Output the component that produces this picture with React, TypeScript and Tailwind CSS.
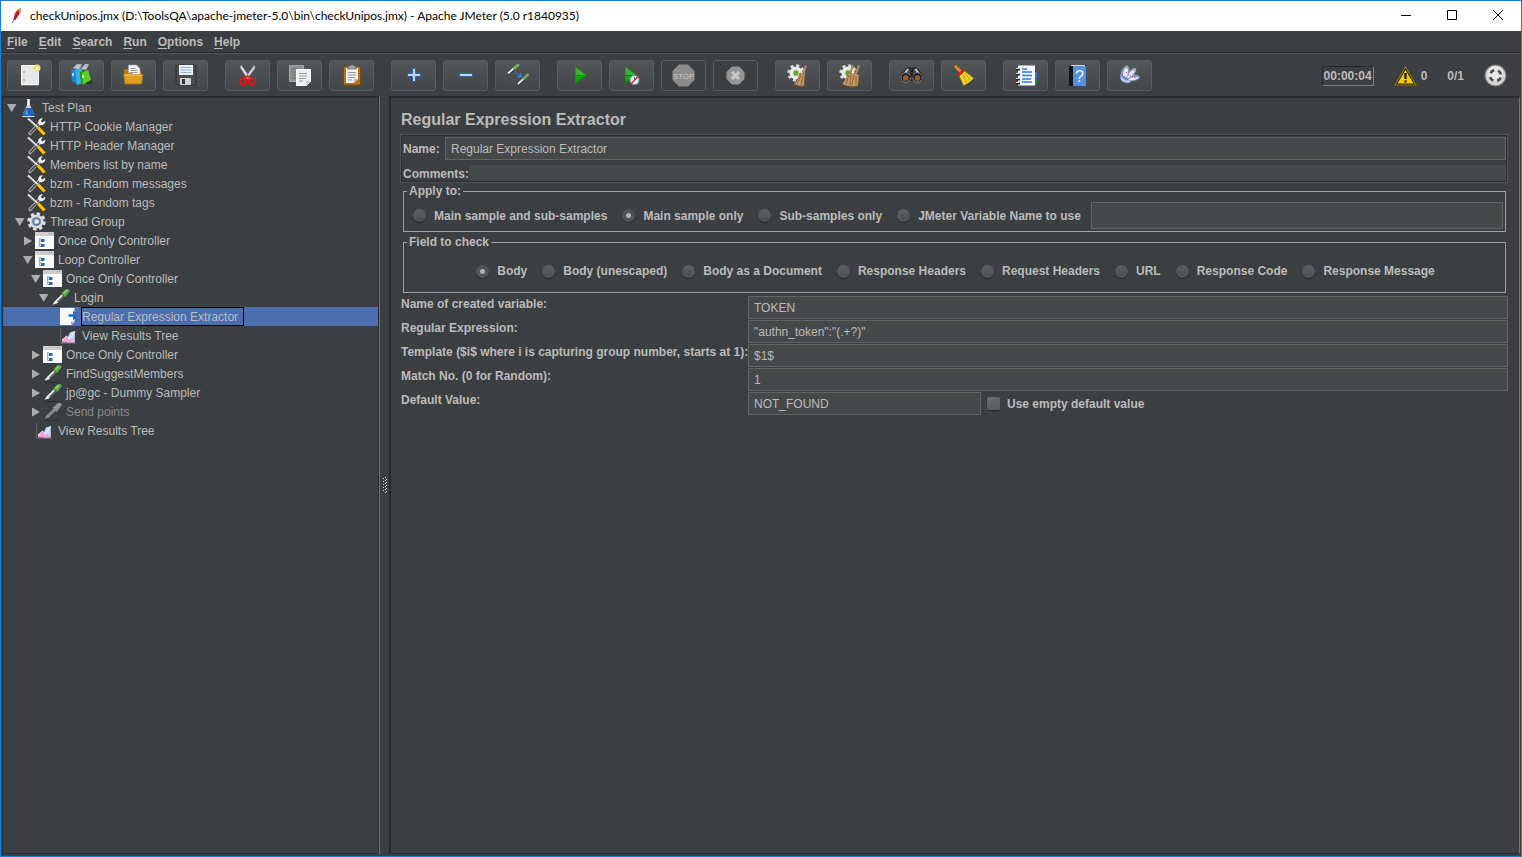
import { useState } from "react";
import type { ReactNode } from "react";
import clsx from "clsx";

type TreeIconName =
  | "plan"
  | "tools"
  | "gear"
  | "controller"
  | "sampler"
  | "samplerOff"
  | "extractor"
  | "results";

type TreeItem = {
  id: string;
  label: string;
  icon: TreeIconName;
  disabled?: boolean;
  closed?: boolean;
  children?: TreeItem[];
};

const TREE: TreeItem = {
  id: "plan",
  label: "Test Plan",
  icon: "plan",
  children: [
    { id: "cookie", label: "HTTP Cookie Manager", icon: "tools" },
    { id: "header", label: "HTTP Header Manager", icon: "tools" },
    { id: "members", label: "Members list by name", icon: "tools" },
    { id: "messages", label: "bzm - Random messages", icon: "tools" },
    { id: "tags", label: "bzm - Random tags", icon: "tools" },
    {
      id: "threads",
      label: "Thread Group",
      icon: "gear",
      children: [
        { id: "once1", label: "Once Only Controller", icon: "controller", closed: true, children: [] },
        {
          id: "loop",
          label: "Loop Controller",
          icon: "controller",
          children: [
            {
              id: "once2",
              label: "Once Only Controller",
              icon: "controller",
              children: [
                {
                  id: "login",
                  label: "Login",
                  icon: "sampler",
                  children: [
                    { id: "regex", label: "Regular Expression Extractor", icon: "extractor" },
                    { id: "results1", label: "View Results Tree", icon: "results" },
                  ],
                },
              ],
            },
            { id: "once3", label: "Once Only Controller", icon: "controller", closed: true, children: [] },
            { id: "find", label: "FindSuggestMembers", icon: "sampler", closed: true, children: [] },
            { id: "dummy", label: "jp@gc - Dummy Sampler", icon: "sampler", closed: true, children: [] },
            {
              id: "send",
              label: "Send points",
              icon: "samplerOff",
              disabled: true,
              closed: true,
              children: [],
            },
          ],
        },
        { id: "results2", label: "View Results Tree", icon: "results" },
      ],
    },
  ],
};

function Pipette({ off }: { off?: boolean }) {
  return (
    <>
      <path d="M2 18.500h14" stroke="#2c2e2f" strokeWidth="1" />
      <path d="M1.500 16.800 3.500 13.500 11 6l2.200 2.200-7.400 7.400z" fill={off ? "#8a8a8a" : "#ededed"} />
      <path d="m6.500 14 6-6" stroke={off ? "#808080" : "#5b5f5b"} strokeWidth="1.200" />
      <path d="m10 5 4.500 4.500" stroke={off ? "#8a8a8a" : "#2c5a22"} strokeWidth="1.400" />
      <path d="M10.500 5.500 14 1.800c1.800-1.500 6-.8 4.200 2.200L14 9z" fill={off ? "#8f8f8f" : "#5cab42"} />
      <path d="m12.500 5.500 3.300-3.300" stroke={off ? "#9c9c9c" : "#a3da8c"} strokeWidth="1.200" />
    </>
  );
}

const TREE_ICONS: Record<TreeIconName, ReactNode> = {
  plan: (
    <>
      <path d="M8 1h3v6l4 9v2H4v-2l4-9z" fill="#c9d3dc" />
      <path d="M9.500 1v6" stroke="#fff" strokeWidth="1.200" />
      <path d="m7 10-3 6v2h11v-2l-2.500-6z" fill="#1766c4" />
      <path d="m8 11-2 5 3 1z" fill="#5aa6f2" />
      <path d="M3.500 18.500h12" stroke="#d6e2ee" strokeWidth="1" />
    </>
  ),
  tools: (
    <>
      <path d="M3 16.500 13 6" stroke="#a5a5a5" strokeWidth="3.400" strokeLinecap="round" />
      <path d="M3.500 16 12.500 6.500" stroke="#45484a" strokeWidth="1.400" strokeLinecap="round" />
      <path d="M11.500 7C10.200 3.500 13 .8 15.800 1.200L13.800 4l1.600 1.600L18.200 3.800c.6 2.500-2 5.200-5 4.200z" fill="#f0f0f0" />
      <path d="m1 1.500 10 9.500" stroke="#efefef" strokeWidth="2" />
      <path d="m1.500 3 9 8.500" stroke="#6b6b6b" strokeWidth=".8" />
      <path d="m10.500 10.500 7 7.500" stroke="#4a3b08" strokeWidth="4.400" />
      <path d="m11 10.500 6.500 7" stroke="#ffc20a" strokeWidth="3.200" />
    </>
  ),
  gear: (
    <>
      <circle cx="9.500" cy="9.500" r="7.500" fill="none" stroke="#dedede" strokeWidth="3.400" strokeDasharray="3.200 2.690" />
      <circle cx="9.500" cy="9.500" r="7" fill="#dedede" />
      <circle cx="9.500" cy="9.500" r="4.600" fill="#4b6f9f" stroke="#b4bdc8" strokeWidth="1" />
      <circle cx="9.500" cy="9.500" r="2.800" fill="#a5bcdb" />
      <path d="m8.500 7.500 3.500 2-3.500 2.200z" fill="#fff" />
    </>
  ),
  controller: (
    <>
      <path d="M0 1h19v17H0z" fill="#fafafa" />
      <path d="M0 1h19v4H0z" fill="#cdcdcd" />
      <path d="M14 2.500h1m1 0h1" stroke="#999" strokeWidth="1" />
      <path d="M4.500 7v8.500h3M4.500 10h3" stroke="#a5a5a5" fill="none" strokeWidth="1" />
      <path d="M6 8h3.500v3H6zM6 13h3.500v3H6z" fill="#2468b0" />
      <path d="M4 7h2v1.500H4zM4 12h2v1.500H4z" fill="#8fb3dc" />
    </>
  ),
  sampler: <Pipette />,
  samplerOff: <Pipette off />,
  extractor: (
    <>
      <path d="M1 1h14.500v14L12 18H1z" fill="#fafafa" />
      <path d="M12 18v-4l3.500 1z" fill="#b8b8b8" />
      <path d="M9.500 7.200h4.500V3.500L19 8.500 14 13.500V9.800H9.500z" fill="#1b6fd0" />
    </>
  ),
  results: (
    <>
      <path d="M1.500 2v15.500H17" stroke="#5c5f61" fill="none" strokeWidth="1" />
      <path d="m8 13 3-6.500 4.800-1.500v11.500H8z" fill="#c6dafa" />
      <path d="M3 16.500V14l4.500-4 3 3.500L12 12l3.500 4.500z" fill="#f2a3da" />
      <path d="m3 14 4.500-4 3 3.500L14 8l2-3" fill="none" stroke="#fff" strokeWidth=".8" />
    </>
  ),
};

function TreeRow({
  item,
  level,
  selected,
  onSelect,
}: {
  item: TreeItem;
  level: number;
  selected: string;
  onSelect: (id: string) => void;
}) {
  const [open, setOpen] = useState(!item.closed);
  const active = selected === item.id;

  return (
    <li role="treeitem" aria-selected={active} aria-expanded={item.children ? open : undefined}>
      <div className={clsx("flex h-[19px] items-center", active && "bg-[#4b6eaf]")}>
        <span className="shrink-0" style={{ width: 4 + level * 8 }} />
        {item.children ? (
          <button
            type="button"
            aria-label={`Toggle ${item.label}`}
            className="w-3 shrink-0"
            onClick={() => setOpen(!open)}
          >
            <svg viewBox="0 0 12 12" className="block size-3" fill="#adadad">
              {open ? <path d="M0 2h9.500L4.700 10z" /> : <path d="M1 1.500 9 6 1 10.500z" />}
            </svg>
          </button>
        ) : (
          <span className="w-3 shrink-0" />
        )}
        <svg viewBox="0 0 19 19" className="size-[19px] shrink-0">
          {TREE_ICONS[item.icon]}
        </svg>
        <button
          type="button"
          onClick={() => onSelect(item.id)}
          className={clsx(
            "ml-[3px] h-[19px] border pr-[5px] leading-[19px] whitespace-nowrap",
            active ? "border-black" : "border-transparent",
            item.disabled ? "text-[#888888]" : "text-[#bbbbbb]"
          )}
        >
          {item.label}
        </button>
      </div>
      {item.children && open && (
        <ul role="group">
          {item.children.map((child) => (
            <TreeRow key={child.id} item={child} level={level + 1} selected={selected} onSelect={onSelect} />
          ))}
        </ul>
      )}
    </li>
  );
}

const MINI_GEAR = (
  <>
    <circle cx="10" cy="9" r="7" fill="none" stroke="#dcdcdc" strokeWidth="3.500" strokeDasharray="2.800 2.700" />
    <circle cx="10" cy="9" r="6.500" fill="#ececec" />
    <circle cx="10" cy="9" r="3" fill="#62a82c" stroke="#b9c9ac" strokeWidth="1" />
  </>
);

type ToolButton = { name: string; disabled?: boolean; art: ReactNode };

const TOOLBAR: ToolButton[][] = [
  [
    {
      name: "New",
      art: (
        <>
          <path d="M3.500 1.500h17v19h-17z" fill="#e6e6e6" stroke="#fafafa" />
          <path d="M3 21.500h18" stroke="#77736a" strokeWidth="1" />
          <path d="M6 7v2m0 6v2" stroke="#888" strokeWidth="1" />
          <circle cx="19" cy="4" r="3.500" fill="#f1e171" />
          <circle cx="19" cy="4" r="1.500" fill="#fffbd0" />
        </>
      ),
    },
    {
      name: "Templates",
      art: (
        <>
          <path d="M12 20h11l-3-5z" fill="#303334" />
          <path d="M3 4 7 0h5L9 6zM11 5l4-5h4l-3 6z" fill="#b9c0c3" stroke="#8a9193" strokeWidth=".6" />
          <path d="m1 5 7 1v15l-6-4z" fill="#1488d2" />
          <path d="m5 6 7-2v15l-5 2z" fill="#3aaeea" />
          <path d="m10 8 6-2v14l-5 1z" fill="#2a930e" />
          <path d="m12 9 6-3 3 10-8 4.500z" fill="#55d321" />
          <path d="M3 9v3m10-1v3" stroke="#e8f6ff" strokeWidth="1.500" />
        </>
      ),
    },
    {
      name: "Open",
      art: (
        <>
          <path d="M2 5.500h5l1 2h11V15H2z" fill="#b97a0c" />
          <path d="M6.500 1h8L18 4.500V13H6.500z" fill="#f1f1f1" stroke="#aaa" strokeWidth=".6" />
          <path d="M8.500 4.500h5m-5 2h7m-7 2h7" stroke="#999" strokeWidth="1" />
          <path d="m1.500 10 7-1h1l1 1.500H21L19.500 20H3z" fill="#dc9f20" stroke="#a86f08" strokeWidth=".8" />
          <path d="M3 11h17" stroke="#f3c55c" strokeWidth="1" />
        </>
      ),
    },
    {
      name: "Save",
      art: (
        <>
          <path d="M2 2.500Q2 1 3.500 1h17Q22 1 22 2.500V21H4l-2-2z" fill="#4a4c4e" stroke="#26282a" strokeWidth=".8" />
          <path d="M5 1h14v10H5z" fill="#e9f1fb" />
          <path d="M6.500 3.500h11m-11 2.500h11m-11 2.500h11" stroke="#8fb4da" strokeWidth="1" />
          <path d="M6 14h11v7H6z" fill="#cfcfcf" />
          <path d="M8 15h3v5H8z" fill="#303234" />
        </>
      ),
    },
  ],
  [
    {
      name: "Cut",
      art: (
        <>
          <path d="m5 1 9 13-2 1L4.500 4z" fill="#f0f0f0" stroke="#999" strokeWidth=".6" />
          <path d="M18.500 1 9 14l2 1L19 4z" fill="#dedede" stroke="#999" strokeWidth=".6" />
          <circle cx="7" cy="17.500" r="3" fill="none" stroke="#d81818" strokeWidth="2.500" />
          <circle cx="16" cy="17.500" r="3" fill="none" stroke="#d81818" strokeWidth="2.500" />
          <path d="m8.500 15 3-3 3 3" fill="none" stroke="#e22" strokeWidth="2" />
        </>
      ),
    },
    {
      name: "Copy",
      art: (
        <>
          <path d="M1.500 1.500h14v16h-14z" fill="#8f9293" stroke="#a3a6a7" />
          <path d="M3.500 5h8m-8 3h6m-6 3h5m-5 3h5" stroke="#6d7071" strokeWidth="1" />
          <path d="M8.500 5.500h14v12l-4 4h-10z" fill="#efefef" stroke="#fff" />
          <path d="M11 9.500h8m-8 2.500h8m-8 2.500h7M11 17h4" stroke="#999" strokeWidth="1" />
          <path d="M18.500 21.500v-4h4z" fill="#bfbfbf" />
        </>
      ),
    },
    {
      name: "Paste",
      art: (
        <>
          <rect x="3.500" y="2.500" width="17" height="18.500" rx="1" fill="#b87519" stroke="#7c4a08" strokeWidth="1" />
          <path d="M6 4h12v11l-4 4H6z" fill="#f0f0f0" />
          <path d="M8 8.500h8M8 11h8m-8 2.500h7M8 16h4" stroke="#999" strokeWidth="1" />
          <path d="M14 19v-4h4z" fill="#b5b5b5" />
          <path d="M7.500 5V2.500h2L10.500 1h3l1 1.500h2V5z" fill="#a0a0a0" stroke="#6a6a6a" strokeWidth=".7" />
        </>
      ),
    },
  ],
  [
    {
      name: "Expand all",
      art: <path d="M10.500 4.500h3v5h5v3h-5v5h-3v-5h-5v-3h5z" fill="#bcd5f0" stroke="#2a62b4" strokeWidth="1" />,
    },
    {
      name: "Collapse all",
      art: <path d="M5.500 9.500h13v3h-13z" fill="#bcd5f0" stroke="#2a62b4" strokeWidth="1" />,
    },
    {
      name: "Toggle",
      art: (
        <>
          <path d="m2 10 7-6.500M12 20.500l7-6.500" stroke="#292b2c" strokeWidth="3" />
          <path d="m2 9.500 7-6.500M12 20l7-6.500" stroke="#e5e5e5" strokeWidth="2" />
          <path d="m8.500 4 3.500-3M18 14.500l3.500-3.500" stroke="#77aa5b" strokeWidth="3" strokeLinecap="round" />
          <path d="m8.500 7.500 3 2.500" stroke="#2f82e8" strokeWidth="1.500" strokeDasharray="1.500 1" />
          <path d="M15.500 8.500v5h-5z" fill="#2f82e8" />
        </>
      ),
    },
  ],
  [
    {
      name: "Start",
      art: (
        <>
          <path d="m7 2 12.500 9.500L7 20z" fill="#0a8a0a" />
          <path d="m7.500 3 10.500 8H7.500z" fill="#3fae35" />
          <path d="M7.500 12h9l-9 6z" fill="#08a808" />
        </>
      ),
    },
    {
      name: "Start no pauses",
      art: (
        <>
          <path d="m5 2 12.500 9.500L5 20z" fill="#0a8a0a" />
          <path d="M5.500 3 16 11H5.500z" fill="#3fae35" />
          <path d="M5.500 12h9l-9 6z" fill="#08a808" />
          <circle cx="14.500" cy="16" r="4.500" fill="#eef4fb" stroke="#6d9bc8" strokeWidth="1" />
          <path d="M14.500 16v-3" stroke="#335f93" strokeWidth="1" />
          <path d="m10.500 20.500 8.500-9" stroke="#d42a2a" strokeWidth="1.500" />
        </>
      ),
    },
    {
      name: "Stop",
      disabled: true,
      art: (
        <>
          <path d="M7 .5h9L22.500 7v9L16 22.500H7L.5 16V7z" fill="#8c8c8c" />
          <text x="11.500" y="14.500" textAnchor="middle" fontSize="8" fontWeight="normal" fill="#c6c6c6">
            STOP
          </text>
        </>
      ),
    },
    {
      name: "Shutdown",
      disabled: true,
      art: (
        <>
          <path d="M8 2.500h7l5.500 5.500v7L15 20.500H8L2.500 15V8z" fill="#959595" />
          <path d="m8 8 7 7m0-7-7 7" stroke="#c9c9c9" strokeWidth="3" />
        </>
      ),
    },
  ],
  [
    {
      name: "Clear",
      art: (
        <>
          {MINI_GEAR}
          <path d="m19 1 2 .5L18 11l-2-1z" fill="#b58a5c" />
          <path d="m14 9 5 2-1 11c-4 1-7-1-10-2 3-3 5-7 6-11z" fill="#c69a68" stroke="#7b5630" strokeWidth=".6" />
          <path d="m15 11-4 9m6-8-2 9" stroke="#8c6338" strokeWidth="1" />
        </>
      ),
    },
    {
      name: "Clear all",
      art: (
        <>
          {MINI_GEAR}
          <path d="m14 1 2 .5-3 9-2-1zM20 1l2 .5-3 9-2-1z" fill="#b58a5c" />
          <path d="m10 9 5 1 2-1 4 2-1 11c-5 1-13 0-16-2 3-3 5-7 6-11z" fill="#c69a68" stroke="#7b5630" strokeWidth=".6" />
          <path d="M11 11 8 20m5-9-1 10m4-10-2 10m4-9 0 9" stroke="#8c6338" strokeWidth="1" />
        </>
      ),
    },
  ],
  [
    {
      name: "Search",
      art: (
        <>
          <path d="M7 4h4v4h1.500V4h4l6 7v5H1v-5z" fill="#4b4b4b" stroke="#151515" strokeWidth="1" />
          <path d="M5 9 8 5m10.500 4-3-4" stroke="#c9c9c9" strokeWidth="2" />
          <circle cx="5.800" cy="13.500" r="4.800" fill="#191919" stroke="#8b8b8b" strokeWidth="1" />
          <circle cx="17.500" cy="13.500" r="4.800" fill="#191919" stroke="#8b8b8b" strokeWidth="1" />
          <circle cx="5.800" cy="14" r="2.900" fill="#9a5a26" />
          <circle cx="17.500" cy="14" r="2.900" fill="#9a5a26" />
          <path d="M10 8.500h3.500v5H10z" fill="#2a2a2a" />
        </>
      ),
    },
    {
      name: "Search reset",
      art: (
        <>
          <path d="M9 20.500c4 2 10 1 12-4l-6 1z" fill="#2f3233" />
          <path d="m3.500 2.500 6 6" stroke="#6d4208" strokeWidth="4.500" strokeLinecap="round" />
          <path d="m3.500 2.500 6 6" stroke="#cf9038" strokeWidth="3" strokeLinecap="round" />
          <path d="m12.500 7 9 7c-2 3.500-6 6-10 7.500L7 11.500z" fill="#f0d62c" stroke="#a08208" strokeWidth=".8" />
          <path d="m11.500 11 3 8m-1-9.500 4.500 7" stroke="#b79a10" strokeWidth="1" />
          <path d="m6 11.500 6-5.500" stroke="#d62020" strokeWidth="3" />
        </>
      ),
    },
  ],
  [
    {
      name: "Function helper",
      art: (
        <>
          <path d="M20 8.500h3V14h-3z" fill="#2a7de0" />
          <path d="M20 15h3v5h-3z" fill="#1f8c2a" />
          <path d="M4 1.500h17v20H4z" fill="#fafafa" />
          <path d="M8 5h5m-5 3h10M8 11.500h10M8 15h9m-9 3h10" stroke="#2a7de0" strokeWidth="1.500" />
          <path d="M2 5.500h4m-4 5h4m-4 5h4m-4 4h4" stroke="#222" strokeWidth="2" />
          <path d="M2 4.500h3m-3 5h3m-3 5h3m-3 4h3" stroke="#ddd" strokeWidth="1" />
        </>
      ),
    },
    {
      name: "Help",
      art: (
        <>
          <path d="M3 2.500 5 1h15v19.500L18 22H3z" fill="#121416" />
          <path d="M7 2h13v20H7z" fill="#5590df" />
          <path d="M5 1.500h14" stroke="#d8d8d8" strokeWidth="1" />
          <text x="13.500" y="17.500" textAnchor="middle" fontSize="16" fontWeight="normal" fill="#f4f8ff">
            ?
          </text>
        </>
      ),
    },
    {
      name: "Plugins manager",
      art: (
        <>
          <path d="M2 12Q3 4 9 1q3 2 2.500 6Q15 3 18 4q1 3-2 6.500 5-.5 6 3-2 3.500-8 3.500-3 3-6 2-6-1-6-7z" fill="#7d97cf" />
          <path d="M5 12Q5 5 9 2.500 11 6 9 13zM9 14q2-7 8-9 0 5-6 9zM10 15.500q5-4 11-2-4 3.500-10 2.500z" fill="#e3ebfa" />
          <path d="m4 10 4 5 5 2M8 8l4 4 6 2" stroke="#c84652" strokeWidth="1" strokeDasharray="1.500 1" fill="none" />
          <circle cx="9" cy="3.500" r="1.200" fill="#e69832" />
          <circle cx="17" cy="6" r="1.200" fill="#e69832" />
          <path d="M3 14q4 5 9 3" stroke="#bdcff3" strokeWidth="2" fill="none" />
        </>
      ),
    },
  ],
];

const MENU = ["File", "Edit", "Search", "Run", "Options", "Help"];

const APPLY_TO = ["Main sample and sub-samples", "Main sample only", "Sub-samples only", "JMeter Variable Name to use"];

const FIELD_TO_CHECK = [
  "Body",
  "Body (unescaped)",
  "Body as a Document",
  "Response Headers",
  "Request Headers",
  "URL",
  "Response Code",
  "Response Message",
];

const PARAMS = [
  { id: "refname", label: "Name of created variable:", value: "TOKEN" },
  { id: "regexp", label: "Regular Expression:", value: '"authn_token":"(.+?)"' },
  { id: "template", label: "Template ($i$ where i is capturing group number, starts at 1):", value: "$1$" },
  { id: "match", label: "Match No. (0 for Random):", value: "1" },
];

const fieldClass =
  "min-w-0 border border-[#646464] bg-[#45494a] px-[5px] font-normal text-[#bbbbbb] outline-none focus:border-[#7a8fb5]";

function Radios({ name, options, initial }: { name: string; options: string[]; initial: string }) {
  return (
    <>
      {options.map((option) => (
        <label key={option} className="flex shrink-0 items-center gap-2 whitespace-nowrap">
          <input
            type="radio"
            name={name}
            defaultChecked={option === initial}
            className="size-[13px] appearance-none rounded-full bg-linear-to-b from-[#5c6063] to-[#4b4f51] shadow-[0_1px_1px_#242627] checked:bg-[radial-gradient(circle,#b4b4b4_0_2px,#505456_3px)]"
          />
          {option}
        </label>
      ))}
    </>
  );
}

function TitleBar() {
  return (
    <header className="flex h-[30px] items-center bg-white font-[Lato,'Open_Sans',sans-serif] text-black">
      <svg viewBox="0 0 12 16" className="ml-[10px] h-4 w-3">
        <path d="M3 12Q2 6 7 1.500q2-1.500 3-.5.500 2-1.500 5T4.500 12z" fill="#d22128" />
        <path d="M7 1.500q2-1.500 3-.5.500 2-1.500 4z" fill="#f39a2d" />
        <path d="M3.500 8Q2 11 3 12l2-1.500z" fill="#8a2a80" />
        <path d="M8 3 3 12l-2 3" stroke="#5c2148" strokeWidth=".8" fill="none" />
      </svg>
      <h1 className="ml-[7px] flex-1 whitespace-nowrap">
        checkUnipos.jmx (D:\ToolsQA\apache-jmeter-5.0\bin\checkUnipos.jmx) - Apache JMeter (5.0 r1840935)
      </h1>
      <button type="button" aria-label="Minimize" className="flex h-full w-[46px] items-center justify-center">
        <svg viewBox="0 0 12 12" className="size-3" stroke="#000">
          <path d="M1 5.500h10" />
        </svg>
      </button>
      <button type="button" aria-label="Maximize" className="flex h-full w-[46px] items-center justify-center">
        <svg viewBox="0 0 12 12" className="size-3" stroke="#000" fill="none">
          <path d="M1.500.5h9v9h-9z" />
        </svg>
      </button>
      <button type="button" aria-label="Close" className="flex h-full w-[46px] items-center justify-center">
        <svg viewBox="0 0 12 12" className="size-3" stroke="#000">
          <path d="m1 0 10 10M11 0 1 10" />
        </svg>
      </button>
    </header>
  );
}

function Toolbar() {
  return (
    <div className="flex h-[43px] items-center justify-between border-t border-[#515456] pt-px pr-[14px] pl-[6px] font-bold">
      <div className="flex gap-[17px]">
        {TOOLBAR.map((group) => (
          <div key={group[0].name} className="flex gap-[7px]">
            {group.map((tool) => (
              <button
                key={tool.name}
                type="button"
                aria-label={tool.name}
                disabled={tool.disabled}
                className={clsx(
                  "flex h-[31px] w-[45px] items-center justify-center rounded-[3px] border border-[#5a5d5e]",
                  !tool.disabled && "bg-linear-to-b from-[#525658] to-[#434749]"
                )}
              >
                <svg viewBox="0 0 23 23" className="size-[23px]">
                  {tool.art}
                </svg>
              </button>
            ))}
          </div>
        ))}
      </div>
      <div className="flex items-center">
        <time className="border border-t-[#242627] border-r-[#7b7f80] border-b-[#7b7f80] border-l-[#242627] px-px leading-[18px]">
          00:00:04
        </time>
        <button type="button" className="ml-5 flex items-center gap-1">
          <svg viewBox="0 0 23 20" className="h-5 w-[23px]">
            <path d="m11.500 1 10.500 18H1z" fill="#2b270f" stroke="#8d7416" strokeWidth="1.200" />
            <path d="m11.500 4 8 13.500h-16z" fill="#f7cb08" />
            <path d="M11.500 7v6m0 1.500v2" stroke="#111" strokeWidth="2.200" />
          </svg>
          0
        </button>
        <span className="ml-5">0/1</span>
        <svg viewBox="0 0 23 23" className="ml-5 size-[23px]">
          <circle cx="11.500" cy="11.500" r="11" fill="#757779" />
          <circle cx="11.500" cy="11.500" r="10" fill="#d4d4d4" />
          <circle cx="11.500" cy="9.500" r="7.500" fill="#e6e6e6" />
          <circle cx="11.500" cy="11.500" r="5.500" fill="none" stroke="#484b4d" strokeWidth="2.600" strokeDasharray="4.600 4.040" strokeDashoffset="-2" />
        </svg>
      </div>
    </div>
  );
}

export default function App() {
  const [selected, setSelected] = useState("regex");

  return (
    <div className="flex min-h-screen flex-col border border-[#1a7fd6] bg-[#3c3f41] font-['Liberation_Sans',Arial,sans-serif] text-[12px] leading-[14px] text-[#bbbbbb]">
      <TitleBar />

      <nav className="flex h-[22px] items-center gap-[11px] border-b border-[#2a2c2d] pl-[6px] font-bold">
        {MENU.map((entry) => (
          <button key={entry} type="button">
            <span className="underline underline-offset-2">{entry[0]}</span>
            {entry.slice(1)}
          </button>
        ))}
      </nav>

      <Toolbar />

      <div className="flex flex-1 px-px pb-[2px]">
        <aside className="w-[378px] shrink-0 border-t border-r border-t-[#282a2c] border-r-[#717577]">
          <ul role="tree" aria-label="Test plan" className="h-full border border-[#2b2d2f]">
            <TreeRow item={TREE} level={0} selected={selected} onSelect={setSelected} />
          </ul>
        </aside>

        <div className="flex w-[9px] shrink-0 cursor-col-resize items-center justify-center pt-5">
          <svg viewBox="0 0 4 16" className="h-4 w-1" stroke="#dcdcdc" strokeDasharray="1 2">
            <path d="M.5 1v15M2.500 0v16M3.500 2v14" />
          </svg>
        </div>

        <main className="min-w-0 flex-1 border-t-2 border-r border-b border-l-2 border-t-[#282a2c] border-r-[#717577] border-b-[#2b2d2f] border-l-[#282a2c] pt-3 pr-[11px] pl-[10px]">
          <h2 className="text-[16px] leading-[20px] font-bold">Regular Expression Extractor</h2>

          <section className="mt-[5px] mr-px border border-[#2a2c2d] font-bold outline outline-offset-0 outline-[#515456]">
            <div className="flex items-center pt-px pl-px">
              <label htmlFor="name" className="w-[42px] shrink-0">
                Name:
              </label>
              <input
                id="name"
                defaultValue="Regular Expression Extractor"
                className={clsx(fieldClass, "h-[23px] flex-1")}
              />
            </div>
            <div className="mt-[5px] flex items-center pl-px">
              <label htmlFor="comments" className="shrink-0 pt-px">
                Comments:
              </label>
              <input id="comments" className="h-4 min-w-0 flex-1 bg-[#45494a] px-1 font-normal outline-none" />
            </div>
          </section>

          <fieldset className="mt-[2px] mr-[2px] ml-[2px] border border-[#a0a0a0] pr-[2px] pb-[2px] pl-[9px] font-bold">
            <legend className="-ml-[6px] px-[2px]">Apply to:</legend>
            <div className="flex items-center gap-[15px] pt-1">
              <Radios name="scope" options={APPLY_TO} initial="Main sample only" />
              <input aria-label="JMeter Variable Name" className={clsx(fieldClass, "-ml-[5px] h-[27px] flex-1")} />
            </div>
          </fieldset>

          <fieldset className="mt-[3px] mr-[2px] ml-[2px] border border-[#a0a0a0] font-bold">
            <legend className="ml-[3px] px-[2px]">Field to check</legend>
            <div className="flex items-center justify-center gap-[15px] pt-[15px] pb-[14px] pl-[2px]">
              <Radios name="field" options={FIELD_TO_CHECK} initial="Body" />
            </div>
          </fieldset>

          <div className="mt-[3px] grid grid-cols-[347px_minmax(0,1fr)] gap-y-px font-bold">
            {PARAMS.map((p) => (
              <div key={p.id} className="col-span-2 grid grid-cols-subgrid">
                <label htmlFor={p.id} className="pt-px whitespace-nowrap">
                  {p.label}
                </label>
                <input id={p.id} defaultValue={p.value} className={clsx(fieldClass, "h-[23px]")} />
              </div>
            ))}
            <label htmlFor="default" className="pt-px">
              Default Value:
            </label>
            <div className="flex items-center">
              <input id="default" defaultValue="NOT_FOUND" className={clsx(fieldClass, "h-[23px] w-[233px]")} />
              <label className="ml-[6px] flex items-center gap-[7px]">
                <input
                  type="checkbox"
                  className="size-[13px] appearance-none rounded-[2px] bg-linear-to-b from-[#6a6d6f] to-[#585b5d] shadow-[0_1px_1px_#242627] checked:bg-[#4b6eaf]"
                />
                Use empty default value
              </label>
            </div>
          </div>
        </main>
      </div>
    </div>
  );
}
